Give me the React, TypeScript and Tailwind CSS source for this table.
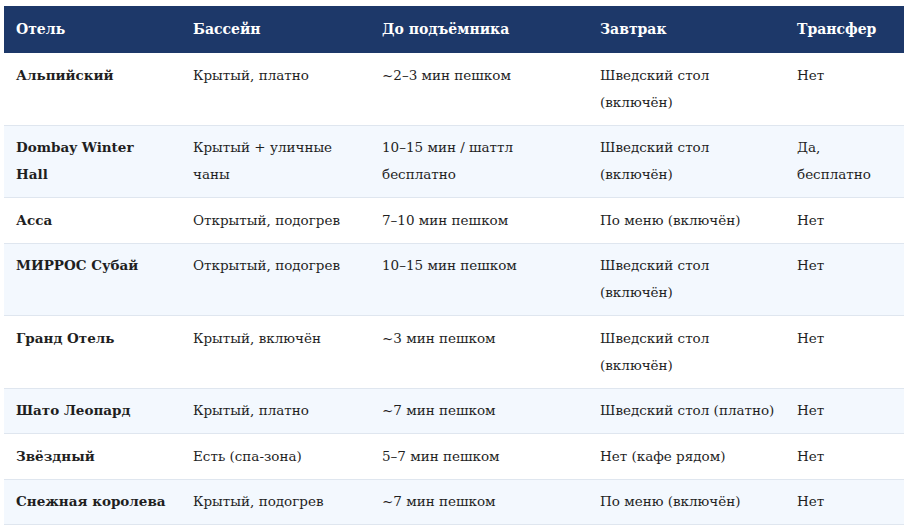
import React from "react";

type Row = { name: React.ReactNode; pool: React.ReactNode; lift: React.ReactNode; breakfast: React.ReactNode; transfer: React.ReactNode };

const rows: Row[] = [
  { name: "Альпийский", pool: "Крытый, платно", lift: "~2–3 мин пешком", breakfast: <>Шведский стол<br />(включён)</>, transfer: "Нет" },
  { name: <>Dombay Winter<br />Hall</>, pool: <>Крытый + уличные<br />чаны</>, lift: <>10–15 мин / шаттл<br />бесплатно</>, breakfast: <>Шведский стол<br />(включён)</>, transfer: <>Да,<br />бесплатно</> },
  { name: "Асса", pool: "Открытый, подогрев", lift: "7–10 мин пешком", breakfast: "По меню (включён)", transfer: "Нет" },
  { name: "МИРРОС Субай", pool: "Открытый, подогрев", lift: "10–15 мин пешком", breakfast: <>Шведский стол<br />(включён)</>, transfer: "Нет" },
  { name: "Гранд Отель", pool: "Крытый, включён", lift: "~3 мин пешком", breakfast: <>Шведский стол<br />(включён)</>, transfer: "Нет" },
  { name: "Шато Леопард", pool: "Крытый, платно", lift: "~7 мин пешком", breakfast: "Шведский стол (платно)", transfer: "Нет" },
  { name: "Звёздный", pool: "Есть (спа-зона)", lift: "5–7 мин пешком", breakfast: "Нет (кафе рядом)", transfer: "Нет" },
  { name: "Снежная королева", pool: "Крытый, подогрев", lift: "~7 мин пешком", breakfast: "По меню (включён)", transfer: "Нет" },
];

const headers = ["Отель", "Бассейн", "До подъёмника", "Завтрак", "Трансфер"];

export default function App() {
  return (
    <div className="bg-white w-[913px] h-[531px] pl-[4px] pt-[6px] overflow-hidden" style={{ fontFamily: '"DejaVu Serif", "Liberation Serif", serif' }}>
      <table className="table-fixed border-collapse w-[900px] text-[13.5px] text-[#1f1f1f]">
        <colgroup>
          <col className="w-[177px]" />
          <col className="w-[189px]" />
          <col className="w-[218px]" />
          <col className="w-[197px]" />
          <col className="w-[119px]" />
        </colgroup>
        <thead>
          <tr className="bg-[#1d3869]">
            {headers.map((h) => (
              <th key={h} className="text-left align-top font-bold text-white text-[14px] px-[12px] py-[10px] leading-[27px] whitespace-nowrap">
                {h}
              </th>
            ))}
          </tr>
        </thead>
        <tbody>
          {rows.map((r, i) => (
            <tr key={i} className={`border-b border-[#dfe6ef] ${i % 2 === 1 ? "bg-[#f3f8fe]" : "bg-white"}`}>
              <td className="align-top px-[12px] py-[8.75px] leading-[27px] font-bold whitespace-nowrap">{r.name}</td>
              <td className="align-top px-[12px] py-[8.75px] leading-[27px] whitespace-nowrap">{r.pool}</td>
              <td className="align-top px-[12px] py-[8.75px] leading-[27px] whitespace-nowrap">{r.lift}</td>
              <td className="align-top px-[12px] py-[8.75px] leading-[27px] whitespace-nowrap">{r.breakfast}</td>
              <td className="align-top px-[12px] py-[8.75px] leading-[27px] whitespace-nowrap">{r.transfer}</td>
            </tr>
          ))}
        </tbody>
      </table>
    </div>
  );
}
